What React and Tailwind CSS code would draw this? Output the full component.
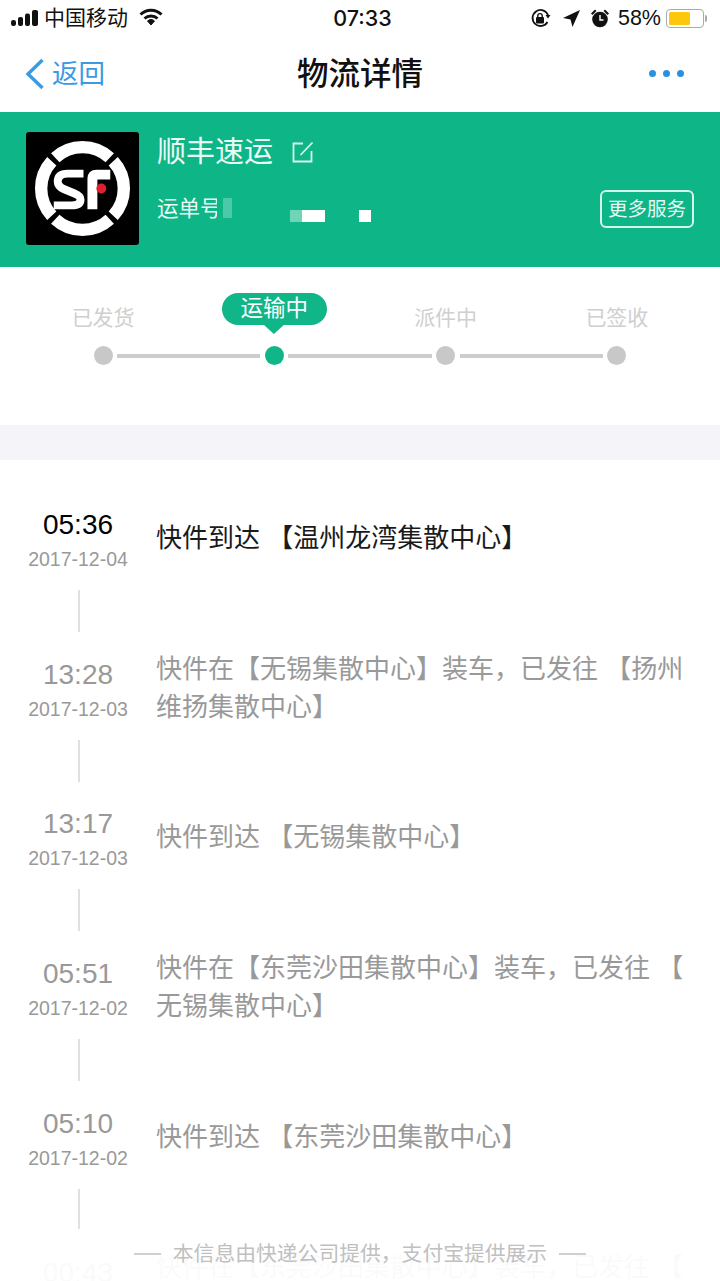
const FONT = "font-['Liberation_Sans','Noto_Sans_CJK_SC',sans-serif]";

const rows = [
  { time: "05:36", date: "2017-12-04", lines: ["快件到达 【温州龙湾集散中心】"], active: true },
  { time: "13:28", date: "2017-12-03", lines: ["快件在【无锡集散中心】装车，已发往 【扬州", "维扬集散中心】"] },
  { time: "13:17", date: "2017-12-03", lines: ["快件到达 【无锡集散中心】"] },
  { time: "05:51", date: "2017-12-02", lines: ["快件在【东莞沙田集散中心】装车，已发往 【", "无锡集散中心】"] },
  { time: "05:10", date: "2017-12-02", lines: ["快件到达 【东莞沙田集散中心】"] },
  { time: "00:43", date: "2017-12-02", lines: ["快件在【东莞沙田集散中心】装车，已发往 【", "东莞集散中心】"] },
];

function Logo() {
  return (
    <div className="w-[113px] h-[113px] bg-black rounded-[3px] shrink-0">
      <svg width="113" height="113" viewBox="0 0 114 114" fill="none">
        <g stroke="#fff" strokeWidth="12.5">
          <path d="M29.5 26 A40.7 40.7 0 0 1 84.5 26" />
          <path d="M88 29.5 A40.7 40.7 0 0 1 88 84.5" />
          <path d="M84.5 88 A40.7 40.7 0 0 1 29.5 88" />
          <path d="M26 84.5 A40.7 40.7 0 0 1 26 29.5" />
        </g>
        <path d="M58 42 H42 Q32 42 32 50 Q32 55 38 57.5 L49 62 Q55 64.5 55 68 Q55 74 46 74 H28" stroke="#fff" strokeWidth="8" />
        <path d="M67 78 V47 Q67 43 71 43 H85" stroke="#fff" strokeWidth="10" />
        <circle cx="76" cy="57" r="5" fill="#e0202e" />
      </svg>
    </div>
  );
}

function Step({ label, active }) {
  return (
    <div className="flex justify-center">
      {active ? (
        <div className="relative w-[105px] h-[32px] rounded-full bg-[#10b588] text-white text-[22.5px] leading-[32px] text-center">
          运输中
          <div className="absolute left-[41px] top-[31px] w-[22px] h-[10px] bg-[#10b588] [clip-path:polygon(0_0,100%_0,50%_100%)]" />
        </div>
      ) : (
        <div className="mt-[10px] text-[21px] leading-[30px] text-[#cfcfcf]">{label}</div>
      )}
    </div>
  );
}

function Row({ r, last }) {
  const tc = r.active ? "text-black" : "text-[#999]";
  const dc = r.active ? "text-[#1a1a1a]" : "text-[#999]";
  return (
    <div className="h-[149.7px] shrink-0">
      <div className="flex items-center h-[68px]">
        <div className="w-[156px] shrink-0 text-center">
          <div className={`text-[28px] leading-[40px] ${tc}`}>{r.time}</div>
          <div className="text-[19.5px] leading-[28px] text-[#999]">{r.date}</div>
        </div>
        <div className={`pb-[2px] text-[26px] leading-[38px] whitespace-nowrap ${dc}`}>
          {r.lines.map((l) => (
            <div key={l}>{l}</div>
          ))}
        </div>
      </div>
      {!last && <div className="ml-[78px] mt-[17px] w-[1.5px] h-[42px] bg-[#e0e0e0]" />}
    </div>
  );
}

export default function App() {
  return (
    <div className={`relative w-[720px] h-[1281px] overflow-hidden bg-white flex flex-col ${FONT}`}>
      {/* Status bar */}
      <div className="h-[36px] shrink-0 flex items-center justify-between pl-[10px] pr-[13px] text-[#111]">
        <div className="flex items-center w-[208px]">
          <svg width="30" height="18" viewBox="0 0 30 18" fill="#111">
            <rect x="1" y="11" width="5" height="6" rx="2.2" />
            <rect x="8" y="8" width="5" height="9" rx="2" />
            <rect x="15" y="4.5" width="5" height="12.5" rx="2" />
            <rect x="22" y="1" width="6" height="16" rx="2" />
          </svg>
          <span className="ml-[4px] text-[21px] leading-[36px]">中国移动</span>
          <svg className="ml-[11px] -mt-[2px]" width="24" height="18" viewBox="0 0 24 18" fill="none" stroke="#111" strokeWidth="3">
            <path d="M1.5 6.5 A15 15 0 0 1 22.5 6.5" />
            <path d="M5.5 10.5 A9.5 9.5 0 0 1 18.5 10.5" />
            <path d="M12 17 L8.5 13 A5 5 0 0 1 15.5 13 Z" fill="#111" strokeWidth="1" />
          </svg>
        </div>
        <div className="text-[21.5px] leading-[36px] font-medium font-['Inter']">07:33</div>
        <div className="flex items-center justify-end w-[200px]">
          <svg width="21" height="21" viewBox="0 0 21 21" fill="none">
            <path d="M17.5 14 A8 8 0 1 1 18 7" stroke="#111" strokeWidth="1.8" />
            <path d="M15.5 7 H20.5 L18 10.5 Z" fill="#111" />
            <rect x="6" y="9" width="8" height="6.5" rx="1" fill="#111" />
            <path d="M7.8 9.5 V7.8 A2.2 2.2 0 0 1 12.2 7.8 V9.5" stroke="#111" strokeWidth="1.4" />
          </svg>
          <svg className="ml-[11px]" width="19" height="19" viewBox="0 0 19 19" fill="#111">
            <path d="M18 1 L10.5 18 L8.5 10.5 L1 9 Z" />
          </svg>
          <svg className="ml-[9px]" width="20" height="20" viewBox="0 0 20 20" fill="#111">
            <circle cx="10" cy="11.5" r="7.8" />
            <path d="M1 5.5 L5 1.5 L6.5 3 L2.5 7 Z M19 5.5 L15 1.5 L13.5 3 L17.5 7 Z" />
            <path d="M10 7 V12 H13.5" stroke="#fff" strokeWidth="1.4" fill="none" />
          </svg>
          <span className="ml-[8px] text-[21.5px] leading-[36px]">58%</span>
          <div className="ml-[5px] w-[38px] h-[19px] rounded-[4px] border-[1.5px] border-[#aaa] p-[2px] bg-white">
            <div className="w-[21px] h-full rounded-[1.5px] bg-[#fdc80c]" />
          </div>
          <div className="ml-[1px] w-[2px] h-[7px] rounded-r-[2px] bg-[#aaa]" />
        </div>
      </div>

      {/* Nav bar */}
      <div className="h-[76px] shrink-0 flex items-center justify-between pl-[25px] pr-[36px]">
        <div className="flex items-center w-[171px] text-[#3a9ae2]">
          <svg width="20" height="32" viewBox="0 0 20 32" fill="none" stroke="#3a9ae2" strokeWidth="3.4">
            <path d="M17.5 2 L3 16 L17.5 30" />
          </svg>
          <span className="ml-[7px] text-[26.5px] leading-[36px]">返回</span>
        </div>
        <div className="text-[31.5px] leading-[40px] font-medium text-[#111]">物流详情</div>
        <div className="w-[160px] flex justify-end gap-[7px] mb-[2px]">
          <div className="w-[7px] h-[7px] rounded-full bg-[#2a90e0]" />
          <div className="w-[7px] h-[7px] rounded-full bg-[#2a90e0]" />
          <div className="w-[7px] h-[7px] rounded-full bg-[#2a90e0]" />
        </div>
      </div>

      {/* Green header */}
      <div className="h-[155px] shrink-0 bg-[#0db587] flex pl-[26px] pr-[26px] pt-[20px]">
        <Logo />
        <div className="ml-[18px] mt-[1px] flex-1 text-white">
          <div className="flex items-center h-[38px]">
            <span className="text-[29px] leading-[38px] text-[#ecfaf6]">顺丰速运</span>
            <svg className="ml-[18px]" width="24" height="24" viewBox="0 0 24 24" fill="none" stroke="#d9f5ec" strokeWidth="1.8">
              <path d="M12 3.5 H2.5 V21.5 H20.5 V11" />
              <path d="M9.5 15 L21.5 2.5" />
            </svg>
          </div>
          <div className="flex items-center justify-between mt-[19px] h-[38px]">
            <div className="flex items-center h-[38px]">
              <div className="w-[60px] overflow-hidden whitespace-nowrap text-[21.5px] leading-[38px] text-[#ecfaf6]">运单号码</div>
              <div className="ml-[6px] w-[9px] h-[20px] mt-[-3px] bg-[#4cc9a6]" />
              <div className="ml-[58px] w-[12px] h-[12px] mt-[13px] bg-[#6fd4b8]" />
              <div className="w-[23px] h-[12px] mt-[13px] bg-white" />
              <div className="ml-[34px] w-[12px] h-[12px] mt-[13px] bg-white" />
            </div>
            <div className="w-[94px] h-[38px] rounded-[6px] border-2 border-[#d5f3ea] text-[19.5px] leading-[34px] text-center text-[#e6f9f3]">更多服务</div>
          </div>
        </div>
      </div>

      {/* Steps */}
      <div className="h-[158px] shrink-0 pt-[26px]">
        <div className="grid grid-cols-4 px-[17.5px] h-[43px]">
          <Step label="已发货" />
          <Step label="运输中" active />
          <Step label="派件中" />
          <Step label="已签收" />
        </div>
        <div className="mt-[10px] flex items-center px-[93.5px]">
          <div className="w-[19px] h-[19px] rounded-full bg-[#c8c8c8] shrink-0" />
          <div className="flex-1 mx-[4.5px] h-[4px] bg-[#cccccc]" />
          <div className="w-[19px] h-[19px] rounded-full bg-[#10b588] shrink-0" />
          <div className="flex-1 mx-[4.5px] h-[4px] bg-[#cccccc]" />
          <div className="w-[19px] h-[19px] rounded-full bg-[#c8c8c8] shrink-0" />
          <div className="flex-1 mx-[4.5px] h-[4px] bg-[#cccccc]" />
          <div className="w-[19px] h-[19px] rounded-full bg-[#c8c8c8] shrink-0" />
        </div>
      </div>

      <div className="h-[35px] shrink-0 bg-[#f5f5f9]" />

      {/* Timeline */}
      <div className="pt-[45px] flex flex-col">
        {rows.map((r, i) => (
          <Row key={r.time} r={r} last={i === rows.length - 1} />
        ))}
      </div>

      {/* Footer overlay */}
      <div className="absolute left-0 right-0 bottom-0 h-[52px] bg-white/95 flex items-start justify-center pt-[11px]">
        <div className="flex items-center text-[#c0c0c0]">
          <div className="w-[27px] h-[1.5px] bg-[#d0d0d0]" />
          <span className="mx-[12px] text-[20.8px] leading-[28px]">本信息由快递公司提供，支付宝提供展示</span>
          <div className="w-[27px] h-[1.5px] bg-[#d0d0d0]" />
        </div>
      </div>
    </div>
  );
}
